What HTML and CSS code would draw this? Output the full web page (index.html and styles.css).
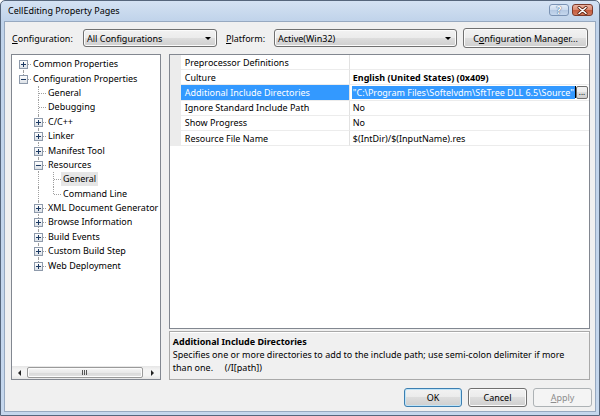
FILE: index.html
```html
<!DOCTYPE html>
<html>
<head>
<meta charset="utf-8">
<title>CellEditing Property Pages</title>
<link rel="stylesheet" href="styles.css">
</head>
<body>
<div class="window">
  <div class="titlebar">
    <span class="title">CellEditing Property Pages</span>
    <div class="caption-btns">
      <span class="cap help">?</span>
      <span class="cap close">
        <svg width="11" height="9" viewBox="0 0 11 9"><path d="M2 1.5 L9 7.5 M9 1.5 L2 7.5" stroke="#5a2010" stroke-width="3" stroke-linecap="round"/><path d="M2 1.5 L9 7.5 M9 1.5 L2 7.5" stroke="#ffffff" stroke-width="1.6" stroke-linecap="round"/></svg>
      </span>
    </div>
  </div>
  <div class="client">
    <div class="toprow">
      <span class="lbl lbl-config"><u>C</u>onfiguration:</span>
      <div class="combo combo-config"><span class="combo-text">All Configurations</span><i class="arrow"></i></div>
      <span class="lbl lbl-platform"><u>P</u>latform:</span>
      <div class="combo combo-platform"><span class="combo-text">Active(Win32)</span><i class="arrow"></i></div>
      <button class="btn btn-cm">C<u>o</u>nfiguration Manager...</button>
    </div>
    <div class="main">
      <div class="tree">
        <div class="tree-items">
          <div class="trow"><span class="c cf"><span class="exp plus"></span></span><span class="tl">Common Properties</span></div>
          <div class="trow"><span class="c cl"><span class="exp"></span></span><span class="tl">Configuration Properties</span></div>
          <div class="trow"><span class="c"></span><span class="c ct"></span><span class="tl">General</span></div>
          <div class="trow"><span class="c"></span><span class="c ct"></span><span class="tl">Debugging</span></div>
          <div class="trow"><span class="c"></span><span class="c ct"><span class="exp plus"></span></span><span class="tl">C/C++</span></div>
          <div class="trow"><span class="c"></span><span class="c ct"><span class="exp plus"></span></span><span class="tl">Linker</span></div>
          <div class="trow"><span class="c"></span><span class="c ct"><span class="exp plus"></span></span><span class="tl">Manifest Tool</span></div>
          <div class="trow"><span class="c"></span><span class="c ct"><span class="exp"></span></span><span class="tl">Resources</span></div>
          <div class="trow"><span class="c"></span><span class="c ci"></span><span class="c ct"></span><span class="tl tsel">General</span></div>
          <div class="trow"><span class="c"></span><span class="c ci"></span><span class="c cl"></span><span class="tl">Command Line</span></div>
          <div class="trow"><span class="c"></span><span class="c ct"><span class="exp plus"></span></span><span class="tl">XML Document Generator</span></div>
          <div class="trow"><span class="c"></span><span class="c ct"><span class="exp plus"></span></span><span class="tl">Browse Information</span></div>
          <div class="trow"><span class="c"></span><span class="c ct"><span class="exp plus"></span></span><span class="tl">Build Events</span></div>
          <div class="trow"><span class="c"></span><span class="c ct"><span class="exp plus"></span></span><span class="tl">Custom Build Step</span></div>
          <div class="trow"><span class="c"></span><span class="c cl"><span class="exp plus"></span></span><span class="tl">Web Deployment</span></div>
        </div>
        <div class="hscroll">
          <span class="sb-arrow"><i class="tri-left"></i></span>
          <span class="sb-track"><span class="sb-thumb"><i class="grip"></i></span></span>
          <span class="sb-arrow"><i class="tri-right"></i></span>
        </div>
      </div>
      <div class="right">
        <div class="grid">
          <div class="prow"><span class="gut"></span><span class="pname">Preprocessor Definitions</span><span class="pval"></span></div>
          <div class="prow"><span class="gut"></span><span class="pname">Culture</span><span class="pval bold">English (United States) (0x409)</span></div>
          <div class="prow"><span class="gut"></span><span class="pname psel">Additional Include Directories</span><span class="pval pedit"><span class="seltext">"C:\Program Files\Softelvdm\SftTree DLL 6.5\Source"</span><i class="caret"></i><span class="spacer"></span><span class="ellip">...</span></span></div>
          <div class="prow"><span class="gut"></span><span class="pname">Ignore Standard Include Path</span><span class="pval">No</span></div>
          <div class="prow"><span class="gut"></span><span class="pname">Show Progress</span><span class="pval">No</span></div>
          <div class="prow"><span class="gut"></span><span class="pname">Resource File Name</span><span class="pval">$(IntDir)/$(InputName).res</span></div>
        </div>
        <div class="desc">
          <div class="desc-title">Additional Include Directories</div>
          <div class="desc-line">Specifies one or more directories to add to the include path; use semi-colon delimiter if more</div>
          <div class="desc-line">than one.     (/I[path])</div>
        </div>
      </div>
    </div>
    <div class="bottom">
      <button class="btn btn-ok">OK</button>
      <button class="btn btn-cancel">Cancel</button>
      <button class="btn btn-apply" disabled><u>A</u>pply</button>
    </div>
  </div>
</div>
</body>
</html>
```
FILE: styles.css
```css
* { box-sizing: border-box; }
html, body { margin: 0; padding: 0; }
body {
  width: 600px;
  height: 416px;
  overflow: hidden;
  font-family: "Noto Sans", "Liberation Sans", sans-serif;
  font-size: 9px;
  color: #000;
  background: #fff;
}

.window {
  width: 600px;
  height: 416px;
  border: 1px solid #56667c;
  border-radius: 5px 5px 0 0;
  background: linear-gradient(#d4e2f3 0px, #c0d3ea 20px, #c5d7ed 100%);
  padding: 0 3px 3px 3px;
  display: flex;
  flex-direction: column;
}

.titlebar {
  height: 20px;
  flex: none;
  display: flex;
  justify-content: space-between;
  align-items: flex-start;
  padding-left: 4px;
}
.title { line-height: 20px; color: #000; }
.caption-btns { display: flex; gap: 3px; margin-top: 3px; margin-right: 3px; }
.cap {
  height: 12px;
  border-radius: 3px;
  display: flex;
  align-items: center;
  justify-content: center;
}
.help {
  width: 20px;
  border: 1px solid #7b93b4;
  background: linear-gradient(#e4edf8, #c9d9ed 50%, #b4c8e2 50%, #c5d7ee);
  color: #fff;
  font-weight: bold;
  font-size: 10px;
  line-height: 10px;
  text-shadow: 0 0 1px #3d5a80, 0 0 1px #3d5a80;
}
.close {
  width: 21px;
  border: 1px solid #7d3a2a;
  background: linear-gradient(#eab3a1, #d9876c 50%, #c45a3c 50%, #d1785c);
}

.client {
  flex: 1;
  min-height: 0;
  background: #f0f0f0;
  border: 1px solid #97a9c0;
  padding: 6px 5px 4px 6px;
  display: flex;
  flex-direction: column;
}

.toprow { height: 20px; display: flex; align-items: center; flex: none; }
.lbl { white-space: nowrap; }
.lbl-config { margin-left: 1px; width: 71px; }
.lbl-platform { margin-left: 9px; width: 48px; }

.combo {
  height: 18px;
  border: 1px solid #707070;
  border-radius: 3px;
  background: linear-gradient(#f2f2f2, #ebebeb 50%, #dddddd 50%, #cfcfcf);
  box-shadow: inset 0 0 0 1px #fbfbfb;
  display: flex;
  align-items: center;
  padding-left: 3px;
}
.combo-text { flex: 1; white-space: nowrap; }
.combo-config { width: 134px; }
.combo-platform { width: 183px; }
.arrow {
  width: 0;
  height: 0;
  border-left: 3px solid transparent;
  border-right: 3px solid transparent;
  border-top: 3px solid #000;
  margin-right: 5px;
}

.btn {
  font: inherit;
  color: #000;
  height: 19px;
  padding: 0;
  border: 1px solid #707070;
  border-radius: 3px;
  background: linear-gradient(#f2f2f2, #ebebeb 50%, #dddddd 50%, #cfcfcf);
  box-shadow: inset 0 0 0 1px #fbfbfb;
  text-align: center;
  white-space: nowrap;
}
.btn-cm { margin-left: 6px; width: 125px; height: 20px; }

.main {
  height: 326px;
  margin-top: 6px;
  display: flex;
  gap: 8px;
  flex: none;
}

.tree {
  width: 150px;
  border: 1px solid #828790;
  background: #fff;
  display: flex;
  flex-direction: column;
  overflow: hidden;
}
.tree-items { flex: 1; padding: 2px 0 0 4px; }
.trow { height: 14.4px; display: flex; align-items: center; white-space: nowrap; }
.c { width: 15px; height: 100%; position: relative; flex: none; }
.cf::before, .ct::before, .cl::before, .ci::before {
  content: '';
  position: absolute;
  left: 7px;
  border-left: 1px dotted #a0a0a0;
}
.cf::before { top: 50%; bottom: 0; }
.ct::before, .ci::before { top: 0; bottom: 0; }
.cl::before { top: 0; height: 50%; }
.cf::after, .ct::after, .cl::after {
  content: '';
  position: absolute;
  left: 8px;
  right: 0;
  top: 50%;
  border-top: 1px dotted #a0a0a0;
}
.exp {
  position: absolute;
  left: 3px;
  top: calc(50% - 4px);
  width: 9px;
  height: 9px;
  border: 1px solid #8e9aab;
  background: linear-gradient(#ffffff, #dce1e7);
  z-index: 1;
}
.exp::before {
  content: '';
  position: absolute;
  left: 1px;
  right: 1px;
  top: 3px;
  height: 1px;
  background: #1d3a63;
}
.exp.plus::after {
  content: '';
  position: absolute;
  top: 1px;
  bottom: 1px;
  left: 3px;
  width: 1px;
  background: #1d3a63;
}
.tl { padding: 0 2px; line-height: 14px; }
.tsel { background: #e6e6e6; }

.hscroll {
  height: 13px;
  flex: none;
  display: flex;
  background: linear-gradient(#e6e6e6, #f4f4f4 30%, #f4f4f4 70%, #e6e6e6);
}
.sb-arrow { width: 15px; display: flex; align-items: center; justify-content: center; }
.tri-left {
  width: 0; height: 0;
  border-top: 3px solid transparent;
  border-bottom: 3px solid transparent;
  border-right: 3px solid #222;
}
.tri-right {
  width: 0; height: 0;
  border-top: 3px solid transparent;
  border-bottom: 3px solid transparent;
  border-left: 3px solid #222;
}
.sb-track { flex: 1; display: flex; padding: 1px 2px 1px 0; }
.sb-thumb {
  flex: 1;
  border: 1px solid #9a9a9a;
  border-radius: 2px;
  background: linear-gradient(#f6f6f6, #e9e9e9 50%, #d9d9d9 50%, #e2e2e2);
  box-shadow: inset 0 0 0 1px #fcfcfc;
  display: flex;
  align-items: center;
  justify-content: center;
}
.grip {
  width: 6px;
  height: 5px;
  background: repeating-linear-gradient(90deg, #555 0 1px, transparent 1px 2px);
}

.right { flex: 1; display: flex; flex-direction: column; min-height: 0; }
.grid {
  flex: 1;
  min-height: 0;
  border: 1px solid #828790;
  background: #fff;
}
.prow { height: 15.2px; display: flex; white-space: nowrap; }
.gut { width: 11px; background: #ececec; flex: none; }
.pname {
  width: 169px;
  flex: none;
  border-right: 1px solid #e2e2e2;
  border-bottom: 1px solid #ececec;
  padding-left: 4px;
  display: flex;
  align-items: center;
}
.pval {
  flex: 1;
  border-bottom: 1px solid #ececec;
  padding-left: 3px;
  display: flex;
  align-items: center;
  overflow: hidden;
}
.bold { font-weight: bold; }
.psel { background: #3399ff; color: #fff; }
.pedit { padding-left: 2px; }
.seltext { background: #3399ff; color: #fff; line-height: 13px; padding: 0 1px; }
.caret { width: 1px; height: 12px; background: #000; }
.spacer { flex: 1; }
.ellip {
  width: 12px;
  height: 13px;
  margin-right: 1px;
  border: 1px solid #707070;
  border-radius: 2px;
  background: linear-gradient(#f2f2f2, #ebebeb 50%, #dddddd 50%, #cfcfcf);
  font-size: 8px;
  line-height: 9px;
  text-align: center;
}

.desc {
  height: 49px;
  flex: none;
  margin-top: 2px;
  border: 1px solid #a9a9a9;
  box-shadow: inset 0 1px 0 #ffffff;
  padding: 3px 3px 0 3px;
  line-height: 13px;
  overflow: hidden;
}
.desc-title { font-weight: bold; white-space: nowrap; }
.desc-line { white-space: pre; }

.bottom {
  margin-top: 8px;
  margin-right: -2px;
  height: 19px;
  flex: none;
  display: flex;
  justify-content: flex-end;
  gap: 6px;
}
.btn-ok {
  width: 58px;
  border-color: #3c7fb1;
  box-shadow: inset 0 0 0 1px #bfe4f8;
}
.btn-cancel { width: 59px; }
.btn-apply {
  width: 59px;
  color: #8d8d8d;
  border-color: #adb2b5;
  background: #f4f4f4;
  box-shadow: none;
}
```
